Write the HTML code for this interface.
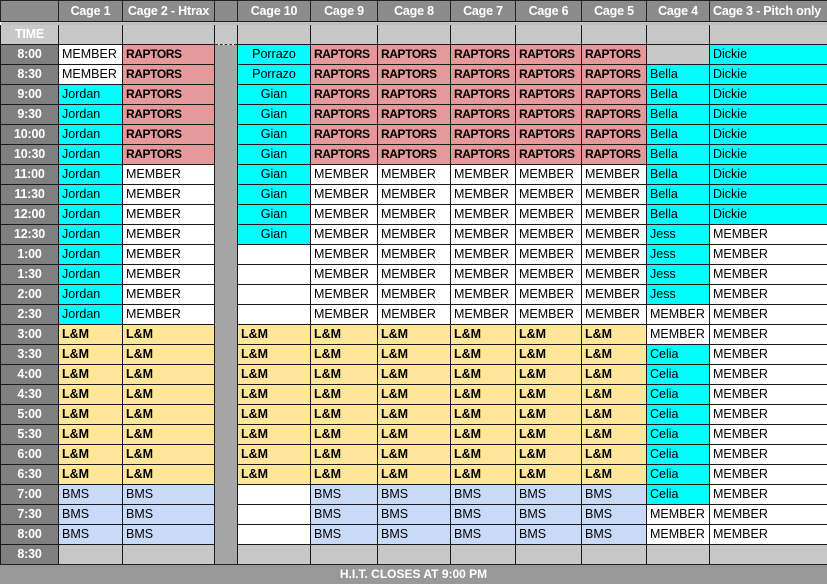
<!DOCTYPE html><html><head><meta charset="utf-8"><style>
body{margin:0;width:827px;height:583px;overflow:hidden;background:#fff;font-family:"Liberation Sans",sans-serif;}
table{border-collapse:collapse;table-layout:fixed;width:827px;position:absolute;left:0;top:0;}
td{border:1px solid #1a1a1a;height:19px;padding:0 0 0 3px;font-size:12.5px;line-height:19px;white-space:nowrap;overflow:hidden;color:#000;}
tr.h td{background:#8c8c8c;color:#fff;font-weight:bold;text-align:center;height:20px;padding:0;border-color:#222;font-size:12.5px;letter-spacing:-0.2px}
tr.sp td{height:3px;background:#c0c0c0;border:none;padding:0;line-height:0}
tr.tm td{background:#c8c8c8;border-top:none;border-bottom:1px dashed #333;}
td.t{background:#808080;color:#fff;font-weight:bold;text-align:center;padding:0;letter-spacing:-0.2px}
td.g{background:#a6a6a6;border-top:none;border-bottom:none;}
.w{background:#fff}.p{background:#e6999a;font-weight:bold;font-size:12px;letter-spacing:-0.4px}.c{background:#00ffff}.y{background:#ffe699;font-weight:bold}.b{background:#c9daf8}.e{background:#c8c8c8}
.m{text-align:center;padding:0}
#f{position:absolute;left:0;top:564px;width:827px;height:19px;background:#999;color:#fff;font-weight:bold;font-size:12px;text-align:center;line-height:19px;border-top:1px solid #222}
</style></head><body>
<table>
<colgroup><col style="width:58px"><col style="width:64px"><col style="width:92px"><col style="width:23px"><col style="width:73px"><col style="width:67px"><col style="width:73px"><col style="width:65px"><col style="width:66px"><col style="width:65px"><col style="width:63px"><col style="width:118px"></colgroup>
<tr class="h"><td></td><td>Cage 1</td><td>Cage 2 - Htrax</td><td></td><td>Cage 10</td><td>Cage 9</td><td>Cage 8</td><td>Cage 7</td><td>Cage 6</td><td>Cage 5</td><td>Cage 4</td><td style="text-align:left;padding-left:3px">Cage 3 - Pitch only</td></tr>
<tr class="sp"><td colspan="12"></td></tr>
<tr class="tm"><td class="t">TIME</td><td></td><td></td><td class="g"></td><td></td><td></td><td></td><td></td><td></td><td></td><td></td><td></td></tr>
<tr><td class="t">8:00</td><td class="w">MEMBER</td><td class="p">RAPTORS</td><td class="g"></td><td class="c m">Porrazo</td><td class="p">RAPTORS</td><td class="p">RAPTORS</td><td class="p">RAPTORS</td><td class="p">RAPTORS</td><td class="p">RAPTORS</td><td class="e"></td><td class="c">Dickie</td></tr>
<tr><td class="t">8:30</td><td class="w">MEMBER</td><td class="p">RAPTORS</td><td class="g"></td><td class="c m">Porrazo</td><td class="p">RAPTORS</td><td class="p">RAPTORS</td><td class="p">RAPTORS</td><td class="p">RAPTORS</td><td class="p">RAPTORS</td><td class="c">Bella</td><td class="c">Dickie</td></tr>
<tr><td class="t">9:00</td><td class="c">Jordan</td><td class="p">RAPTORS</td><td class="g"></td><td class="c m">Gian</td><td class="p">RAPTORS</td><td class="p">RAPTORS</td><td class="p">RAPTORS</td><td class="p">RAPTORS</td><td class="p">RAPTORS</td><td class="c">Bella</td><td class="c">Dickie</td></tr>
<tr><td class="t">9:30</td><td class="c">Jordan</td><td class="p">RAPTORS</td><td class="g"></td><td class="c m">Gian</td><td class="p">RAPTORS</td><td class="p">RAPTORS</td><td class="p">RAPTORS</td><td class="p">RAPTORS</td><td class="p">RAPTORS</td><td class="c">Bella</td><td class="c">Dickie</td></tr>
<tr><td class="t">10:00</td><td class="c">Jordan</td><td class="p">RAPTORS</td><td class="g"></td><td class="c m">Gian</td><td class="p">RAPTORS</td><td class="p">RAPTORS</td><td class="p">RAPTORS</td><td class="p">RAPTORS</td><td class="p">RAPTORS</td><td class="c">Bella</td><td class="c">Dickie</td></tr>
<tr><td class="t">10:30</td><td class="c">Jordan</td><td class="p">RAPTORS</td><td class="g"></td><td class="c m">Gian</td><td class="p">RAPTORS</td><td class="p">RAPTORS</td><td class="p">RAPTORS</td><td class="p">RAPTORS</td><td class="p">RAPTORS</td><td class="c">Bella</td><td class="c">Dickie</td></tr>
<tr><td class="t">11:00</td><td class="c">Jordan</td><td class="w">MEMBER</td><td class="g"></td><td class="c m">Gian</td><td>MEMBER</td><td>MEMBER</td><td>MEMBER</td><td>MEMBER</td><td>MEMBER</td><td class="c">Bella</td><td class="c">Dickie</td></tr>
<tr><td class="t">11:30</td><td class="c">Jordan</td><td class="w">MEMBER</td><td class="g"></td><td class="c m">Gian</td><td>MEMBER</td><td>MEMBER</td><td>MEMBER</td><td>MEMBER</td><td>MEMBER</td><td class="c">Bella</td><td class="c">Dickie</td></tr>
<tr><td class="t">12:00</td><td class="c">Jordan</td><td class="w">MEMBER</td><td class="g"></td><td class="c m">Gian</td><td>MEMBER</td><td>MEMBER</td><td>MEMBER</td><td>MEMBER</td><td>MEMBER</td><td class="c">Bella</td><td class="c">Dickie</td></tr>
<tr><td class="t">12:30</td><td class="c">Jordan</td><td class="w">MEMBER</td><td class="g"></td><td class="c m">Gian</td><td>MEMBER</td><td>MEMBER</td><td>MEMBER</td><td>MEMBER</td><td>MEMBER</td><td class="c">Jess</td><td>MEMBER</td></tr>
<tr><td class="t">1:00</td><td class="c">Jordan</td><td class="w">MEMBER</td><td class="g"></td><td></td><td>MEMBER</td><td>MEMBER</td><td>MEMBER</td><td>MEMBER</td><td>MEMBER</td><td class="c">Jess</td><td>MEMBER</td></tr>
<tr><td class="t">1:30</td><td class="c">Jordan</td><td class="w">MEMBER</td><td class="g"></td><td></td><td>MEMBER</td><td>MEMBER</td><td>MEMBER</td><td>MEMBER</td><td>MEMBER</td><td class="c">Jess</td><td>MEMBER</td></tr>
<tr><td class="t">2:00</td><td class="c">Jordan</td><td class="w">MEMBER</td><td class="g"></td><td></td><td>MEMBER</td><td>MEMBER</td><td>MEMBER</td><td>MEMBER</td><td>MEMBER</td><td class="c">Jess</td><td>MEMBER</td></tr>
<tr><td class="t">2:30</td><td class="c">Jordan</td><td class="w">MEMBER</td><td class="g"></td><td></td><td>MEMBER</td><td>MEMBER</td><td>MEMBER</td><td>MEMBER</td><td>MEMBER</td><td>MEMBER</td><td>MEMBER</td></tr>
<tr><td class="t">3:00</td><td class="y">L&amp;M</td><td class="y">L&amp;M</td><td class="g"></td><td class="y">L&amp;M</td><td class="y">L&amp;M</td><td class="y">L&amp;M</td><td class="y">L&amp;M</td><td class="y">L&amp;M</td><td class="y">L&amp;M</td><td>MEMBER</td><td>MEMBER</td></tr>
<tr><td class="t">3:30</td><td class="y">L&amp;M</td><td class="y">L&amp;M</td><td class="g"></td><td class="y">L&amp;M</td><td class="y">L&amp;M</td><td class="y">L&amp;M</td><td class="y">L&amp;M</td><td class="y">L&amp;M</td><td class="y">L&amp;M</td><td class="c">Celia</td><td>MEMBER</td></tr>
<tr><td class="t">4:00</td><td class="y">L&amp;M</td><td class="y">L&amp;M</td><td class="g"></td><td class="y">L&amp;M</td><td class="y">L&amp;M</td><td class="y">L&amp;M</td><td class="y">L&amp;M</td><td class="y">L&amp;M</td><td class="y">L&amp;M</td><td class="c">Celia</td><td>MEMBER</td></tr>
<tr><td class="t">4:30</td><td class="y">L&amp;M</td><td class="y">L&amp;M</td><td class="g"></td><td class="y">L&amp;M</td><td class="y">L&amp;M</td><td class="y">L&amp;M</td><td class="y">L&amp;M</td><td class="y">L&amp;M</td><td class="y">L&amp;M</td><td class="c">Celia</td><td>MEMBER</td></tr>
<tr><td class="t">5:00</td><td class="y">L&amp;M</td><td class="y">L&amp;M</td><td class="g"></td><td class="y">L&amp;M</td><td class="y">L&amp;M</td><td class="y">L&amp;M</td><td class="y">L&amp;M</td><td class="y">L&amp;M</td><td class="y">L&amp;M</td><td class="c">Celia</td><td>MEMBER</td></tr>
<tr><td class="t">5:30</td><td class="y">L&amp;M</td><td class="y">L&amp;M</td><td class="g"></td><td class="y">L&amp;M</td><td class="y">L&amp;M</td><td class="y">L&amp;M</td><td class="y">L&amp;M</td><td class="y">L&amp;M</td><td class="y">L&amp;M</td><td class="c">Celia</td><td>MEMBER</td></tr>
<tr><td class="t">6:00</td><td class="y">L&amp;M</td><td class="y">L&amp;M</td><td class="g"></td><td class="y">L&amp;M</td><td class="y">L&amp;M</td><td class="y">L&amp;M</td><td class="y">L&amp;M</td><td class="y">L&amp;M</td><td class="y">L&amp;M</td><td class="c">Celia</td><td>MEMBER</td></tr>
<tr><td class="t">6:30</td><td class="y">L&amp;M</td><td class="y">L&amp;M</td><td class="g"></td><td class="y">L&amp;M</td><td class="y">L&amp;M</td><td class="y">L&amp;M</td><td class="y">L&amp;M</td><td class="y">L&amp;M</td><td class="y">L&amp;M</td><td class="c">Celia</td><td>MEMBER</td></tr>
<tr><td class="t">7:00</td><td class="b">BMS</td><td class="b">BMS</td><td class="g"></td><td></td><td class="b">BMS</td><td class="b">BMS</td><td class="b">BMS</td><td class="b">BMS</td><td class="b">BMS</td><td class="c">Celia</td><td>MEMBER</td></tr>
<tr><td class="t">7:30</td><td class="b">BMS</td><td class="b">BMS</td><td class="g"></td><td></td><td class="b">BMS</td><td class="b">BMS</td><td class="b">BMS</td><td class="b">BMS</td><td class="b">BMS</td><td>MEMBER</td><td>MEMBER</td></tr>
<tr><td class="t">8:00</td><td class="b">BMS</td><td class="b">BMS</td><td class="g"></td><td></td><td class="b">BMS</td><td class="b">BMS</td><td class="b">BMS</td><td class="b">BMS</td><td class="b">BMS</td><td>MEMBER</td><td>MEMBER</td></tr>
<tr><td class="t">8:30</td><td class="e"></td><td class="e"></td><td class="g"></td><td class="e"></td><td class="e"></td><td class="e"></td><td class="e"></td><td class="e"></td><td class="e"></td><td class="e"></td><td class="e"></td></tr>
</table>
<div id="f">H.I.T. CLOSES AT 9:00 PM</div>
</body></html>
